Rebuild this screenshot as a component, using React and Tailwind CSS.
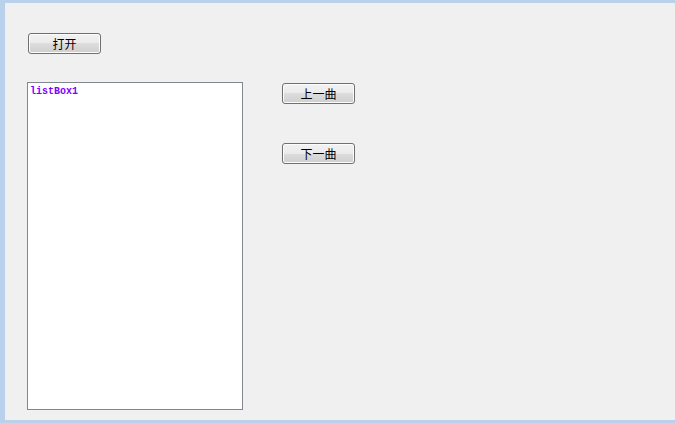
function WinButton({ children, className = '' }) {
  return (
    <button
      type="button"
      className={`h-[21px] w-[73px] rounded-[3px] border border-[#707070] bg-[linear-gradient(to_bottom,#f2f2f2_0%,#ebebeb_50%,#dddddd_50%,#cfcfcf_100%)] shadow-[inset_0_0_0_1px_#fcfcfc] text-[12px] leading-none text-black font-['Noto_Sans_CJK_SC',sans-serif] flex items-center justify-center ${className}`}
    >
      {children}
    </button>
  );
}

export default function App() {
  return (
    <div className="w-[675px] h-[423px] bg-[#b9d1ea] pt-[3px] pl-[5px] pb-[3px] overflow-hidden">
      <div className="h-full w-full bg-[#f0f0f0] pl-[22px] pt-[30px] flex flex-col">
        <WinButton className="ml-[1px]">打开</WinButton>
        <div className="mt-[28px] flex">
          <div className="w-[216px] h-[328px] bg-white border border-[#828790] pl-[2px] pt-[3px]">
            <div className="text-[10px] leading-[12px] font-bold text-[#8000ff] font-['Liberation_Mono',monospace]">listBox1</div>
          </div>
          <div className="ml-[39px] mt-[1px] flex flex-col gap-[39px]">
            <WinButton>上一曲</WinButton>
            <WinButton>下一曲</WinButton>
          </div>
        </div>
      </div>
    </div>
  );
}
